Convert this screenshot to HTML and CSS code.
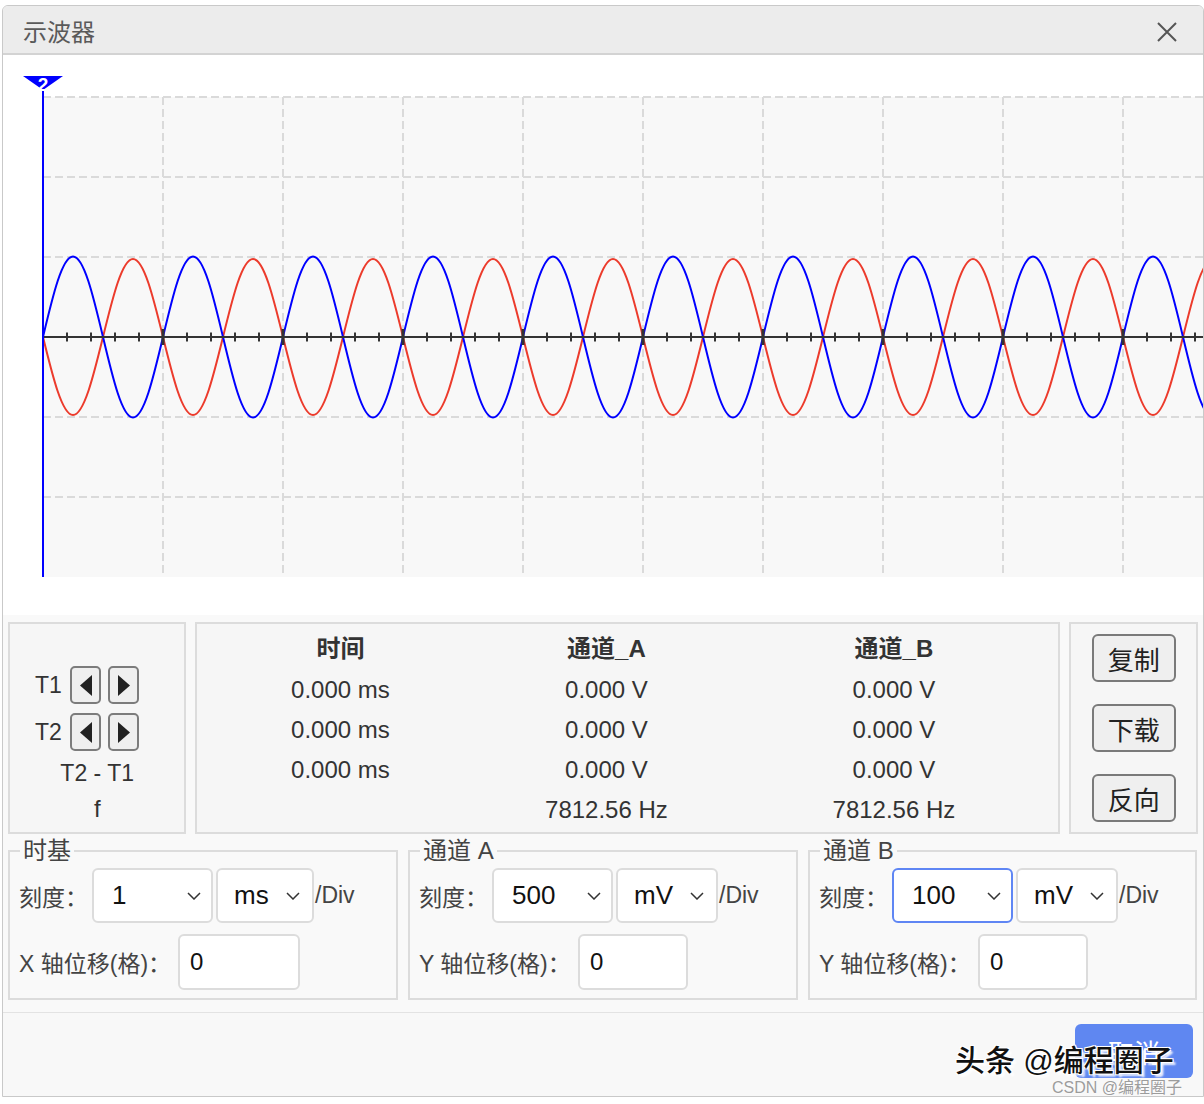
FILE: index.html
```html
<!DOCTYPE html>
<html lang="zh-CN">
<head>
<meta charset="utf-8">
<title>示波器</title>
<link rel="stylesheet" href="styles.css">
</head>
<body>
<div class="dialog">
  <div class="titlebar">
    <span class="title">示波器</span>
    <svg class="close" width="20" height="20" viewBox="0 0 20 20"><path d="M1 1L19 19M19 1L1 19" stroke="#555" stroke-width="2" fill="none"/></svg>
  </div>

  <div class="chart">
    <svg width="1200" height="560" viewBox="0 0 1200 560">
      <defs>
        <clipPath id="plotclip"><rect x="40" y="42" width="1160" height="480"/></clipPath>
        <pattern id="tk" x="52" y="0" width="24" height="560" patternUnits="userSpaceOnUse"><rect x="11" y="277.5" width="2" height="9" fill="#333"/></pattern>
        <pattern id="tkm" x="100" y="0" width="120" height="560" patternUnits="userSpaceOnUse"><rect x="58.5" y="274" width="3" height="16" fill="#333"/></pattern>
      </defs>
      <rect x="40" y="42" width="1160" height="480" fill="#f8f8f8"/>
      <g stroke="#dadada" stroke-width="2" stroke-dasharray="8 4" fill="none">
        <path d="M40 42H1200M40 122H1200M40 202H1200M40 362H1200M40 442H1200"/>
        <path d="M160 42V522M280 42V522M400 42V522M520 42V522M640 42V522M760 42V522M880 42V522M1000 42V522M1120 42V522"/>
      </g>
      <g clip-path="url(#plotclip)" fill="none" stroke-width="2" stroke-linejoin="round">
        <path stroke="#ec3b2c" d="M40 282 c9.784 39.96 19.143 78 30 78 s20.216 -38.04 30 -78 s19.143 -78 30 -78 s20.216 38.04 30 78 s19.143 78 30 78 s20.216 -38.04 30 -78 s19.143 -78 30 -78 s20.216 38.04 30 78 s19.143 78 30 78 s20.216 -38.04 30 -78 s19.143 -78 30 -78 s20.216 38.04 30 78 s19.143 78 30 78 s20.216 -38.04 30 -78 s19.143 -78 30 -78 s20.216 38.04 30 78 s19.143 78 30 78 s20.216 -38.04 30 -78 s19.143 -78 30 -78 s20.216 38.04 30 78 s19.143 78 30 78 s20.216 -38.04 30 -78 s19.143 -78 30 -78 s20.216 38.04 30 78 s19.143 78 30 78 s20.216 -38.04 30 -78 s19.143 -78 30 -78 s20.216 38.04 30 78 s19.143 78 30 78 s20.216 -38.04 30 -78 s19.143 -78 30 -78 s20.216 38.04 30 78 s19.143 78 30 78 s20.216 -38.04 30 -78 s19.143 -78 30 -78 s20.216 38.04 30 78 s19.143 78 30 78 s20.216 -38.04 30 -78 s19.143 -78 30 -78 s20.216 38.04 30 78"/>
        <path stroke="#0000ff" d="M40 282 c9.784 -41.24 19.143 -80.5 30 -80.5 s20.216 39.26 30 80.5 s19.143 80.5 30 80.5 s20.216 -39.26 30 -80.5 s19.143 -80.5 30 -80.5 s20.216 39.26 30 80.5 s19.143 80.5 30 80.5 s20.216 -39.26 30 -80.5 s19.143 -80.5 30 -80.5 s20.216 39.26 30 80.5 s19.143 80.5 30 80.5 s20.216 -39.26 30 -80.5 s19.143 -80.5 30 -80.5 s20.216 39.26 30 80.5 s19.143 80.5 30 80.5 s20.216 -39.26 30 -80.5 s19.143 -80.5 30 -80.5 s20.216 39.26 30 80.5 s19.143 80.5 30 80.5 s20.216 -39.26 30 -80.5 s19.143 -80.5 30 -80.5 s20.216 39.26 30 80.5 s19.143 80.5 30 80.5 s20.216 -39.26 30 -80.5 s19.143 -80.5 30 -80.5 s20.216 39.26 30 80.5 s19.143 80.5 30 80.5 s20.216 -39.26 30 -80.5 s19.143 -80.5 30 -80.5 s20.216 39.26 30 80.5 s19.143 80.5 30 80.5 s20.216 -39.26 30 -80.5 s19.143 -80.5 30 -80.5 s20.216 39.26 30 80.5 s19.143 80.5 30 80.5 s20.216 -39.26 30 -80.5 s19.143 -80.5 30 -80.5 s20.216 39.26 30 80.5 s19.143 80.5 30 80.5 s20.216 -39.26 30 -80.5"/>
      </g>
      <line x1="40" y1="282" x2="1200" y2="282" stroke="#333" stroke-width="2"/>
      <rect x="42" y="270" width="1158" height="22" fill="url(#tk)"/>
      <rect x="42" y="270" width="1158" height="22" fill="url(#tkm)"/>
      <line x1="40" y1="34" x2="40" y2="522" stroke="#0000ff" stroke-width="2"/>
      <polygon points="20,21 60,21 40,35" fill="#0000ff"/>
      <text x="40" y="36" text-anchor="middle" class="marker-num">2</text>
    </svg>
  </div>

  <div class="lower">
    <div class="panels">
      <div class="panel cursors">
        <div class="trow">
          <span class="tlabel">T1</span>
          <button class="arrow"><svg width="12" height="21" viewBox="0 0 12 21"><polygon points="12,0 12,21 0,10.5" fill="#222"/></svg></button>
          <button class="arrow"><svg width="12" height="21" viewBox="0 0 12 21"><polygon points="0,0 0,21 12,10.5" fill="#222"/></svg></button>
        </div>
        <div class="trow trow2">
          <span class="tlabel">T2</span>
          <button class="arrow"><svg width="12" height="21" viewBox="0 0 12 21"><polygon points="12,0 12,21 0,10.5" fill="#222"/></svg></button>
          <button class="arrow"><svg width="12" height="21" viewBox="0 0 12 21"><polygon points="0,0 0,21 12,10.5" fill="#222"/></svg></button>
        </div>
        <div class="diff">T2 - T1</div>
        <div class="freq">f</div>
      </div>

      <div class="panel readout">
        <div class="hd">时间</div><div class="hd">通道_A</div><div class="hd">通道_B</div>
        <div>0.000 ms</div><div>0.000 V</div><div>0.000 V</div>
        <div>0.000 ms</div><div>0.000 V</div><div>0.000 V</div>
        <div>0.000 ms</div><div>0.000 V</div><div>0.000 V</div>
        <div></div><div>7812.56 Hz</div><div>7812.56 Hz</div>
      </div>

      <div class="panel actions">
        <button class="btn">复制</button>
        <button class="btn">下载</button>
        <button class="btn">反向</button>
      </div>
    </div>

    <div class="controls">
      <fieldset class="fs fs-time">
        <legend>时基</legend>
        <div class="row">
          <span class="lbl">刻度：</span>
          <div class="select sel-num"><span>1</span><svg class="chev" width="14" height="8" viewBox="0 0 14 8"><polyline points="1,1 7,7 13,1" fill="none" stroke="#333" stroke-width="1.5"/></svg></div>
          <div class="select sel-unit sel-ms"><span>ms</span><svg class="chev" width="14" height="8" viewBox="0 0 14 8"><polyline points="1,1 7,7 13,1" fill="none" stroke="#333" stroke-width="1.5"/></svg></div>
          <span class="per">/Div</span>
        </div>
        <div class="row row2">
          <span class="lbl lbl-wide">X 轴位移(格)：</span>
          <input class="num num-time" value="0">
        </div>
      </fieldset>

      <fieldset class="fs fs-a">
        <legend>通道 A</legend>
        <div class="row">
          <span class="lbl">刻度：</span>
          <div class="select sel-num"><span>500</span><svg class="chev" width="14" height="8" viewBox="0 0 14 8"><polyline points="1,1 7,7 13,1" fill="none" stroke="#333" stroke-width="1.5"/></svg></div>
          <div class="select sel-unit"><span>mV</span><svg class="chev" width="14" height="8" viewBox="0 0 14 8"><polyline points="1,1 7,7 13,1" fill="none" stroke="#333" stroke-width="1.5"/></svg></div>
          <span class="per">/Div</span>
        </div>
        <div class="row row2">
          <span class="lbl lbl-wide">Y 轴位移(格)：</span>
          <input class="num num-ch" value="0">
        </div>
      </fieldset>

      <fieldset class="fs fs-b">
        <legend>通道 B</legend>
        <div class="row">
          <span class="lbl">刻度：</span>
          <div class="select sel-num focus"><span>100</span><svg class="chev" width="14" height="8" viewBox="0 0 14 8"><polyline points="1,1 7,7 13,1" fill="none" stroke="#333" stroke-width="1.5"/></svg></div>
          <div class="select sel-unit"><span>mV</span><svg class="chev" width="14" height="8" viewBox="0 0 14 8"><polyline points="1,1 7,7 13,1" fill="none" stroke="#333" stroke-width="1.5"/></svg></div>
          <span class="per">/Div</span>
        </div>
        <div class="row row2">
          <span class="lbl lbl-wide">Y 轴位移(格)：</span>
          <input class="num num-ch" value="0">
        </div>
      </fieldset>
    </div>
  </div>

  <div class="footer">
    <button class="cancel">取消</button>
  </div>

  <div class="wm">头条 @编程圈子</div>
  <div class="wm-csdn">CSDN @编程圈子</div>
</div>
</body>
</html>
```

FILE: styles.css
```css
html, body {
  margin: 0;
  padding: 0;
}

body {
  background: #ffffff;
  font-family: "Liberation Sans", "Noto Sans CJK SC", sans-serif;
  color: #333;
}

.dialog {
  position: relative;
  width: 1200px;
  margin: 5px 0 0 2px;
  border: 1px solid #c9c9c9;
  border-radius: 6px 6px 0 0;
  overflow: hidden;
  background: #f8f8f8;
}

/* title bar */
.titlebar {
  height: 45px;
  padding: 2px 26px 0 20px;
  display: flex;
  align-items: center;
  justify-content: space-between;
  background: #ececec;
  border-bottom: 2px solid #d3d3d3;
}

.title {
  font-size: 24px;
  color: #5a5a5a;
}

.close {
  display: block;
  margin-top: 3px;
}

/* chart */
.chart {
  height: 560px;
  background: #ffffff;
}

.chart svg {
  display: block;
}

.marker-num {
  font-family: "Liberation Sans", sans-serif;
  font-weight: bold;
  font-size: 19px;
  fill: #ffffff;
}

/* lower section */
.lower {
  padding: 7px 5px 12px;
  background: #f9f9f9;
}

.panels {
  display: flex;
  gap: 9px;
  height: 212px;
}

.panel {
  box-sizing: border-box;
  border: 2px solid #dcdcdc;
  background: #f6f6f6;
}

.cursors {
  width: 179px;
  padding-top: 42px;
  color: #333;
}

.trow {
  display: flex;
  align-items: center;
  height: 38px;
  margin-left: 25px;
}

.trow2 {
  margin-top: 9px;
}

.tlabel {
  width: 35px;
  font-size: 23px;
  line-height: 38px;
}

.arrow {
  box-sizing: border-box;
  width: 31px;
  height: 38px;
  margin: 0 7px 0 0;
  padding: 0;
  border: 2px solid #7c7c7c;
  border-radius: 5px;
  background: #efefef;
  display: flex;
  align-items: center;
  justify-content: center;
}

.arrow svg {
  display: block;
}

.diff {
  margin-top: 2px;
  text-align: center;
  font-size: 23px;
  line-height: 40px;
}

.freq {
  text-align: center;
  font-size: 24px;
  line-height: 32px;
}

.readout {
  width: 865px;
  padding-top: 6px;
  display: grid;
  grid-template-columns: 286px 246px 329px;
  grid-auto-rows: 40px;
  align-content: start;
  text-align: center;
  font-size: 24px;
  line-height: 40px;
  color: #333;
}

.readout .hd {
  font-weight: bold;
  margin-top: -1px;
}

.actions {
  width: 129px;
  padding-top: 10px;
  display: flex;
  flex-direction: column;
  align-items: center;
  gap: 22px;
}

.btn {
  box-sizing: border-box;
  width: 84px;
  height: 48px;
  padding: 0;
  border: 2px solid #7a7a7a;
  border-radius: 6px;
  background: #efefef;
  font-family: inherit;
  font-size: 26px;
  color: #222;
}

/* controls */
.controls {
  display: flex;
  gap: 10px;
  margin-top: 5px;
}

.fs {
  box-sizing: border-box;
  margin: 0;
  min-width: 0;
  padding: 5px 9px 8px;
  border: 2px solid #dcdcdc;
}

.fs-time,
.fs-a {
  width: 390px;
}

.fs-b {
  width: 389px;
}

.fs legend {
  margin-left: 1px;
  padding: 0 3px;
  font-size: 24px;
  line-height: 24px;
  color: #444;
}

.row {
  display: flex;
  align-items: center;
  height: 55px;
}

.row2 {
  height: 56px;
  margin-top: 11px;
}

.lbl {
  width: 73px;
  flex: none;
  font-size: 23px;
  color: #444;
  white-space: nowrap;
}

.lbl-wide {
  width: 159px;
}

.select {
  box-sizing: border-box;
  height: 55px;
  flex: none;
  display: flex;
  align-items: center;
  justify-content: space-between;
  padding: 0 10px 0 18px;
  border: 2px solid #dcdcdc;
  border-radius: 6px;
  background: #ffffff;
  font-size: 26px;
  color: #111;
}

.sel-num {
  width: 121px;
}

.sel-unit {
  width: 102px;
  margin-left: 3px;
  padding-left: 16px;
  padding-right: 12px;
}

.sel-unit.sel-ms {
  width: 98px;
}

.select.focus {
  border-color: #5f86f4;
}

.chev {
  display: block;
}

.per {
  margin-left: 1px;
  font-size: 23px;
  color: #444;
}

.num {
  box-sizing: border-box;
  height: 56px;
  padding: 0 0 0 10px;
  border: 2px solid #dcdcdc;
  border-radius: 6px;
  background: #ffffff;
  font-family: inherit;
  font-size: 24px;
  color: #111;
  outline: none;
}

.num-time {
  width: 122px;
}

.num-ch {
  width: 110px;
}

/* footer */
.footer {
  height: 72px;
  padding: 11px 10px 0 0;
  display: flex;
  justify-content: flex-end;
  align-items: flex-start;
  border-top: 1px solid #e3e3e3;
  background: #f8f8f8;
}

.cancel {
  width: 118px;
  height: 54px;
  padding: 0;
  border: none;
  border-radius: 6px;
  background: #5f87f1;
  font-family: inherit;
  font-size: 26px;
  color: #ffffff;
}

/* watermark overlays */
.wm {
  position: absolute;
  left: 952px;
  top: 1039px;
  font-size: 30px;
  line-height: 32px;
  font-weight: 500;
  color: #111;
  white-space: nowrap;
  text-shadow: -1px -1px 0 #fff, 1px -1px 0 #fff, -1px 1px 0 #fff, 1px 1px 0 #fff, 3px 3px 2px rgba(255, 255, 255, 0.9);
}

.wm-csdn {
  position: absolute;
  left: 1049px;
  top: 1072px;
  font-size: 16px;
  line-height: 20px;
  color: #9c9c9c;
  white-space: nowrap;
  text-shadow: 0 0 2px #fff;
}
```
